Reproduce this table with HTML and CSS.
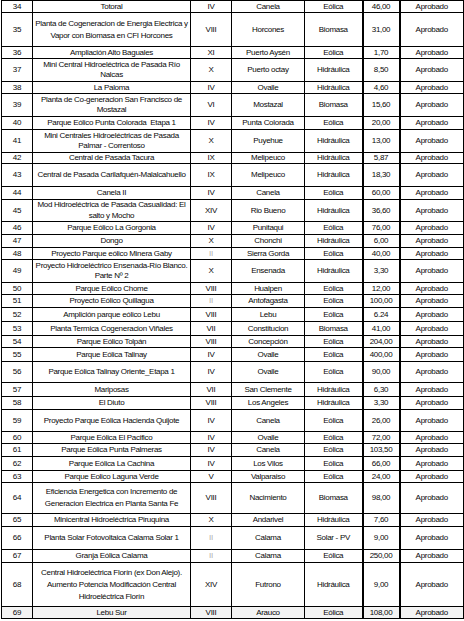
FILE: index.html
```html
<!DOCTYPE html>
<html lang="es">
<head>
<meta charset="utf-8">
<title>Proyectos aprobados</title>
<link rel="stylesheet" href="styles.css">
</head>
<body>
<table class="grid">
<colgroup>
<col class="c-num"><col class="c-name"><col class="c-reg"><col class="c-com"><col class="c-type"><col class="c-mw"><col class="c-st">
</colgroup>
<tbody>
<tr class="h12"><td>34</td><td>Totoral</td><td>IV</td><td>Canela</td><td>Eólica</td><td>46,00</td><td>Aprobado</td></tr>
<tr class="h34"><td>35</td><td class="ml12">Planta de Cogeneracion de Energia Electrica y<br>Vapor con Biomasa en CFI Horcones</td><td>VIII</td><td>Horcones</td><td>Biomasa</td><td>31,00</td><td>Aprobado</td></tr>
<tr class="h12"><td>36</td><td>Ampliación Alto Baguales</td><td>XI</td><td>Puerto Aysén</td><td>Eólica</td><td>1,70</td><td>Aprobado</td></tr>
<tr class="h23"><td>37</td><td class="ml">Mini Central Hidroeléctrica de Pasada Río<br>Nalcas</td><td>X</td><td>Puerto octay</td><td>Hidráulica</td><td>8,50</td><td>Aprobado</td></tr>
<tr class="h12"><td>38</td><td>La Paloma</td><td>IV</td><td>Ovalle</td><td>Hidráulica</td><td>4,60</td><td>Aprobado</td></tr>
<tr class="h23"><td>39</td><td class="ml">Planta de Co-generacion San Francisco de<br>Mostazal</td><td>VI</td><td>Mostazal</td><td>Biomasa</td><td>15,60</td><td>Aprobado</td></tr>
<tr class="h13"><td>40</td><td>Parque Eólico Punta Colorada&nbsp; Etapa 1</td><td>IV</td><td>Punta Colorada</td><td>Eólica</td><td>20,00</td><td>Aprobado</td></tr>
<tr class="h23"><td>41</td><td class="ml">Mini Centrales Hidroeléctricas de Pasada<br>Palmar - Correntoso</td><td>X</td><td>Puyehue</td><td>Hidráulica</td><td>13,00</td><td>Aprobado</td></tr>
<tr class="h11"><td>42</td><td>Central de Pasada Tacura</td><td>IX</td><td>Melipeuco</td><td>Hidráulica</td><td>5,87</td><td>Aprobado</td></tr>
<tr class="h23"><td>43</td><td>Central de Pasada Carilafquén-Malalcahuello</td><td>IX</td><td>Melipeuco</td><td>Hidráulica</td><td>18,30</td><td>Aprobado</td></tr>
<tr class="h13"><td>44</td><td>Canela II</td><td>IV</td><td>Canela</td><td>Eólica</td><td>60,00</td><td>Aprobado</td></tr>
<tr class="h22"><td>45</td><td class="ml">Mod Hidroeléctrica de Pasada Casualidad: El<br>salto y Mocho</td><td>XIV</td><td>Rio Bueno</td><td>Hidráulica</td><td>36,60</td><td>Aprobado</td></tr>
<tr class="h13"><td>46</td><td>Parque Eólico La Gorgonia</td><td>IV</td><td>Punitaqui</td><td>Eólica</td><td>76,00</td><td>Aprobado</td></tr>
<tr class="h13"><td>47</td><td>Dongo</td><td>X</td><td>Chonchi</td><td>Hidráulica</td><td>6,00</td><td>Aprobado</td></tr>
<tr class="h12"><td>48</td><td>Proyecto Parque eólico Minera Gaby</td><td class="faint">II</td><td>Sierra Gorda</td><td>Eólica</td><td>40,00</td><td>Aprobado</td></tr>
<tr class="h23"><td>49</td><td class="ml">Proyecto Hidroeléctrico Ensenada-Río Blanco.<br>Parte Nº 2</td><td>X</td><td>Ensenada</td><td>Hidráulica</td><td>3,30</td><td>Aprobado</td></tr>
<tr class="h12"><td>50</td><td>Parque Eólico Chome</td><td>VIII</td><td>Hualpen</td><td>Eólica</td><td>12,00</td><td>Aprobado</td></tr>
<tr class="h13"><td>51</td><td>Proyecto Eólico Quillagua</td><td class="faint">II</td><td>Antofagasta</td><td>Eólica</td><td>100,00</td><td>Aprobado</td></tr>
<tr class="h14"><td>52</td><td>Amplición parque eólico Lebu</td><td>VIII</td><td>Lebu</td><td>Eólica</td><td>6.24</td><td>Aprobado</td></tr>
<tr class="h14"><td>53</td><td>Planta Termica Cogeneracion Viñales</td><td>VII</td><td>Constitucion</td><td>Biomasa</td><td>41,00</td><td>Aprobado</td></tr>
<tr class="h12"><td>54</td><td>Parque Eólico Tolpán</td><td>VIII</td><td>Concepción</td><td>Eólica</td><td>204,00</td><td>Aprobado</td></tr>
<tr class="h14"><td>55</td><td>Parque Eólica Talinay</td><td>IV</td><td>Ovalle</td><td>Eólica</td><td>400,00</td><td>Aprobado</td></tr>
<tr class="h21"><td>56</td><td>Parque Eólica Talinay Oriente_Etapa 1</td><td>IV</td><td>Ovalle</td><td>Eólica</td><td>90,00</td><td>Aprobado</td></tr>
<tr class="h14"><td>57</td><td>Mariposas</td><td>VII</td><td>San Clemente</td><td>Hidráulica</td><td>6,30</td><td>Aprobado</td></tr>
<tr class="h13"><td>58</td><td>El Diuto</td><td>VIII</td><td>Los Angeles</td><td>Hidráulica</td><td>3,30</td><td>Aprobado</td></tr>
<tr class="h22"><td>59</td><td>Proyecto Parque Eólica Hacienda Quijote</td><td>IV</td><td>Canela</td><td>Eólica</td><td>26,00</td><td>Aprobado</td></tr>
<tr class="h12"><td>60</td><td>Parque Eólica El Pacifico</td><td>IV</td><td>Ovalle</td><td>Eólica</td><td>72,00</td><td>Aprobado</td></tr>
<tr class="h13"><td>61</td><td>Parque Eólica Punta Palmeras</td><td>IV</td><td>Canela</td><td>Eólica</td><td>103,50</td><td>Aprobado</td></tr>
<tr class="h14"><td>62</td><td>Parque Eólica La Cachina</td><td>IV</td><td>Los Vilos</td><td>Eólica</td><td>66,00</td><td>Aprobado</td></tr>
<tr class="h12"><td>63</td><td>Parque Eolico Laguna Verde</td><td>V</td><td>Valparaiso</td><td>Eólica</td><td>24,00</td><td>Aprobado</td></tr>
<tr class="h31"><td>64</td><td class="ml12">Eficiencia Energetica con Incremento de<br>Generacion Electrica en Planta Santa Fe</td><td>VIII</td><td>Nacimiento</td><td>Biomasa</td><td>98,00</td><td>Aprobado</td></tr>
<tr class="h13"><td>65</td><td>Minicentral Hidroeléctrica Piruquina</td><td>X</td><td>Andarivel</td><td>Hidráulica</td><td>7,60</td><td>Aprobado</td></tr>
<tr class="h23"><td>66</td><td>Planta Solar Fotovoltaica Calama Solar 1</td><td class="faint">II</td><td>Calama</td><td>Solar - PV</td><td>9,00</td><td>Aprobado</td></tr>
<tr class="h13"><td>67</td><td>Granja Eólica Calama</td><td class="faint">II</td><td>Calama</td><td>Eólica</td><td>250,00</td><td>Aprobado</td></tr>
<tr class="h44"><td>68</td><td class="ml12">Central Hidroeléctrica Florín (ex Don Alejo).<br>Aumento Potencia Modificación Central<br>Hidroeléctrica Florín</td><td>XIV</td><td>Futrono</td><td>Hidráulica</td><td>9,00</td><td>Aprobado</td></tr>
<tr class="h12 last"><td>69</td><td>Lebu Sur</td><td>VIII</td><td>Arauco</td><td>Eólica</td><td>108,00</td><td>Aprobado</td></tr>
</tbody>
</table>
</body>
</html>
```
FILE: styles.css
```css
html, body {
  margin: 0;
  padding: 0;
  background: #ffffff;
}

.grid {
  margin: 0 0 0 1px;
  border-collapse: collapse;
  table-layout: fixed;
  width: 462px;
  font-family: "Liberation Sans", Arial, sans-serif;
  font-size: 8px;
  letter-spacing: -0.3px;
  line-height: 10px;
  color: #080808;
}

.c-num { width: 31px; }
.c-name { width: 158px; }
.c-reg { width: 41px; }
.c-com { width: 73px; }
.c-type { width: 58px; }
.c-mw { width: 37px; }
.c-st { width: 64px; }

.grid td {
  border: 1px solid #000;
  padding: 0;
  text-align: center;
  vertical-align: middle;
  white-space: nowrap;
  overflow: hidden;
}

.grid td.ml {
  line-height: 10.5px;
}

.grid td.ml12 {
  line-height: 12px;
}

.grid td:nth-child(6),
.grid td:nth-child(7) {
  border-left-width: 2px;
}

.grid tr.last td {
  background: #f3f3f3;
}

.grid td.faint {
  color: #b0b0b0;
}

.h11 { height: 11px; }
.h12 { height: 12px; }
.h13 { height: 13px; }
.h14 { height: 14px; }
.h21 { height: 21px; }
.h22 { height: 22px; }
.h23 { height: 23px; }
.h31 { height: 31px; }
.h34 { height: 34px; }
.h44 { height: 44px; }
```
